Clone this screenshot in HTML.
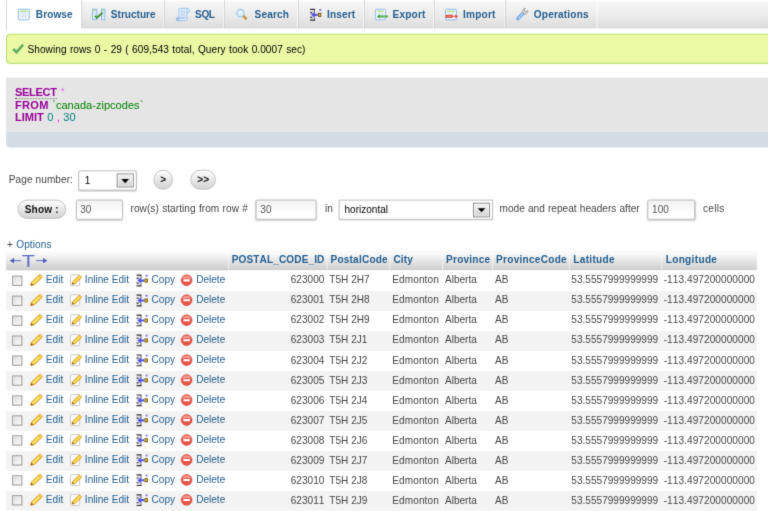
<!DOCTYPE html>
<html>
<head>
<meta charset="utf-8">
<title>phpMyAdmin</title>
<style>
html,body{margin:0;padding:0;background:#fff;}
body{width:768px;height:511px;overflow:hidden;}
#page{position:absolute;left:10px;top:10px;width:1020px;height:690px;transform:scale(0.768);transform-origin:0 0;
  font-family:"Liberation Sans",sans-serif;font-size:13.12px;color:#444;overflow:hidden;font-kerning:none;}
#wrap{position:absolute;left:-10px;top:-10px;width:800px;height:540px;background:#fff;filter:url(#softblur);}
a{color:#245e8e;text-decoration:none;}
svg{display:block;overflow:visible;}
/* tabs */
#tabs{position:absolute;left:8px;top:0;right:0;height:37.4px;background:linear-gradient(#fff 0%,#f6f6f6 7%,#ebebeb 55%,#dbdbdb 100%);}
#tabs ul{list-style:none;margin:0;padding:0;height:37.4px;}
#tabs li{float:left;height:37.4px;box-sizing:border-box;border-left:1px solid #ccc;border-right:1px solid #fff;position:relative;
  font-weight:bold;color:#245e8e;padding:0 0 0 37.3px;line-height:15px;}
#tabs li span{position:relative;top:11.55px;white-space:nowrap;}
#tabs li.active{background:#fff;height:38.5px;}
#tabs li svg{position:absolute;left:14.3px;top:11px;}
/* notice */
#notice{position:absolute;left:8px;top:43.5px;right:-10px;height:37.5px;border:1px solid #a2d246;background:#ebf8a4;border-radius:5px;color:#000;}
#notice span{position:absolute;left:26.8px;top:12.4px;word-spacing:.65px;letter-spacing:.086px;white-space:nowrap;line-height:15px;}
#notice svg{position:absolute;left:6.5px;top:10px;}
/* sql */
#sql{position:absolute;left:8px;top:101px;right:-10px;height:70.5px;background:#e5e5e5;}
#sql code{position:absolute;left:11.5px;top:11.2px;font-family:"Liberation Sans",sans-serif;font-size:14.43px;line-height:16.45px;white-space:pre;word-spacing:.4px;}
#sql b{color:#990099;}
#sql .u{border-bottom:1px dotted #555;}
#sql .p{color:#ff00ff;}
#sql .q{color:#008000;}
#sql .n{color:#008080;}
#tools{position:absolute;left:8px;top:171.5px;right:-10px;height:20.5px;background:#d3dce3;border-radius:0 0 0 5px;}
/* nav */
.abs{position:absolute;white-space:nowrap;}
.inp{position:absolute;box-sizing:border-box;border:1px solid #aaa;border-radius:2.5px;background:linear-gradient(#f1f1f1,#fff 70%);box-shadow:0 1.5px 2px #ccc;color:#555;padding:0 0 0 5px;line-height:24px;}
.inp.sel{background:#fff;color:#000;border-radius:0;border-color:#abadb3;box-shadow:0 1px 1px #ddd;}
.btn{position:absolute;box-sizing:border-box;border:1px solid #b2b2b2;border-radius:13px;background:linear-gradient(#fdfdfd,#d2d2d2);color:#111;font-weight:bold;text-align:center;}
/* table */
#tbl{position:absolute;left:8px;top:326.9px;border-collapse:collapse;table-layout:fixed;width:978px;}
#tbl th{height:25.6px;padding:0 0 3.5px 4.3px;letter-spacing:.14px;text-align:left;font-weight:bold;color:#245e8e;background:linear-gradient(#fff,#ccc);border-right:1px solid rgba(255,255,255,.55);white-space:nowrap;box-sizing:border-box;}
#tbl td{height:26.05px;padding:0 0 1.4px 3.3px;white-space:nowrap;box-sizing:border-box;overflow:hidden;}
#tbl tr.e td{background:#f3f3f3;}
#tbl td.r{text-align:right;padding:0 3.2px 1.4px 0;}
.act{position:relative;height:26.05px;}
.act a,.act svg,.act i{position:absolute;}
.act a{top:4.25px;line-height:15px;}
.act svg{top:4.1px;}
.cb{left:8px;top:6.4px;width:11px;height:11px;border:1px solid #808080;background:linear-gradient(135deg,#d8d8d8,#fff);box-shadow:inset 0 0 0 1px #f0f0f0;}
</style>
</head>
<body>
<div id="wrap"><div id="page">

<div id="tabs"><ul>
<li class="active" style="width:97.66px;padding-left:37.7px"><svg width="16" height="16" viewBox="0 0 16 16"><use href="#i-browse"/></svg><span style="letter-spacing:0.10px">Browse</span></li>
<li style="width:108.72px;padding-left:37.7px"><svg width="16" height="16" viewBox="0 0 16 16"><use href="#i-struct"/></svg><span style="letter-spacing:-0.01px">Structure</span></li>
<li style="width:77.47px;padding-left:38.7px"><svg width="16" height="16" viewBox="0 0 16 16"><use href="#i-sql"/></svg><span style="letter-spacing:-0.52px">SQL</span></li>
<li style="width:95.70px;padding-left:38.7px"><svg width="16" height="16" viewBox="0 0 16 16"><use href="#i-search"/></svg><span style="letter-spacing:0.20px">Search</span></li>
<li style="width:86.26px;padding-left:37.4px"><svg width="16" height="16" viewBox="0 0 16 16"><use href="#i-insert"/></svg><span style="letter-spacing:0.13px">Insert</span></li>
<li style="width:91.15px;padding-left:36.4px"><svg width="16" height="16" viewBox="0 0 16 16"><use href="#i-export"/></svg><span style="letter-spacing:0.24px">Export</span></li>
<li style="width:92.77px;padding-left:37.1px"><svg width="16" height="16" viewBox="0 0 16 16"><use href="#i-import"/></svg><span style="letter-spacing:0.26px">Import</span></li>
<li style="width:120.44px;padding-left:36.4px"><svg width="16" height="16" viewBox="0 0 16 16"><use href="#i-ops"/></svg><span style="letter-spacing:0.23px">Operations</span></li>
</ul></div>

<div id="notice"><svg width="16" height="16" viewBox="0 0 16 16"><use href="#i-ok"/></svg><span>Showing rows 0 - 29 ( 609,543 total, Query took 0.0007 sec)</span></div>

<div id="sql"><code><b class="u" style="letter-spacing:-.42px">SELECT</b> <span class="p" style="font-size:11.5px;line-height:0;position:relative;top:-2px;left:1.2px;color:#f5f">*</span>
<b style="letter-spacing:.4px">FROM</b> <span class="q">`canada-zipcodes`</span>
<b>LIMIT</b> <span class="n">0</span> <span class="p">,</span> <span class="n">30</span></code></div>
<div id="tools"></div>

<div class="abs" style="left:11.5px;top:225.7px;letter-spacing:.1px">Page number:</div>
<div class="inp sel" style="left:102px;top:221.5px;width:75.500px;height:26px;padding-left:7.500px;border-radius:2px">1<i style="position:absolute;right:2.5px;top:3px;width:22px;height:18.5px;border:1px solid #707070;box-sizing:border-box;background:linear-gradient(#f4f4f4,#d2d2d2);box-shadow:inset 0 0 0 1px #fff;"></i><svg style="position:absolute;right:8.5px;top:10px" width="10" height="5.5" viewBox="0 0 10 5.5"><path d="M0 0h10L5 5.500z" fill="#000"/></svg></div>
<div class="btn" style="left:199.700px;top:221px;width:25.600px;height:25.500px;line-height:23px;">&gt;</div>
<div class="btn" style="left:247.700px;top:221px;width:33.800px;height:25.500px;line-height:23px;">&gt;&gt;</div>

<div class="btn" style="left:22.800px;top:260.200px;width:63px;height:25.300px;line-height:24.2px;letter-spacing:.2px">Show :</div>
<div class="inp" style="left:98.5px;top:260px;width:61px;height:26px;">30</div>
<div class="abs" style="left:170px;top:264px;word-spacing:.65px;letter-spacing:.065px">row(s) starting from row #</div>
<div class="inp" style="left:333px;top:260px;width:79px;height:26px;">30</div>
<div class="abs" style="left:423.200px;top:264px;">in</div>
<div class="inp sel" style="left:440.500px;top:260px;width:201px;height:26px;padding-left:7px">horizontal<i style="position:absolute;right:2.5px;top:3px;width:22px;height:18.5px;border:1px solid #707070;box-sizing:border-box;background:linear-gradient(#f4f4f4,#d2d2d2);box-shadow:inset 0 0 0 1px #fff;"></i><svg style="position:absolute;right:8.5px;top:10px" width="10" height="5.5" viewBox="0 0 10 5.5"><path d="M0 0h10L5 5.500z" fill="#000"/></svg></div>
<div class="abs" style="left:650.500px;top:264px;word-spacing:.4px;letter-spacing:.03px">mode and repeat headers after</div>
<div class="inp" style="left:843px;top:260px;width:62px;height:26px;">100</div>
<div class="abs" style="left:915.500px;top:264px;letter-spacing:.3px">cells</div>

<div class="abs" style="left:9px;top:310.900px;"><a style="letter-spacing:.12px;word-spacing:.6px"><span style="color:#444">+</span> Options</a></div>

<table id="tbl">
<colgroup><col style="width:289px"><col style="width:128.5px"><col style="width:82px"><col style="width:68.6px"><col style="width:65.1px"><col style="width:100.6px"><col style="width:120.2px"><col style="width:124px"></colgroup>
<tr><th style="padding:0"><svg width="70" height="25" viewBox="0 0 70 25"><g stroke="#5565bf" stroke-width="1.200" fill="none"><path d="M7 12.400h12.500M39 12.400h12.500"/></g><path d="M4.800 12.400l5.600-3.400v6.800zM53.700 12.400l-5.600-3.400v6.800z" fill="#4a5bb8"/><text transform="translate(29.100 20.700) scale(1.300 1)" x="0" y="0" font-family="Liberation Sans, sans-serif" font-size="21.600" font-weight="normal" text-anchor="middle" fill="#5e6ec4">T</text></svg></th><th>POSTAL_CODE_ID</th><th style="letter-spacing:.27px">PostalCode</th><th>City</th><th style="letter-spacing:.27px">Province</th><th style="letter-spacing:.34px">ProvinceCode</th><th style="letter-spacing:.38px">Latitude</th><th style="letter-spacing:.43px">Longitude</th></tr>
<tr><td style="padding:0;vertical-align:top"><div class="act"><i class="cb"></i><svg style="left:31px" width="16" height="16" viewBox="0 0 16 16"><use href="#i-edit"/></svg><a style="left:51.7px">Edit</a><svg style="left:82.3px" width="16" height="16" viewBox="0 0 16 16"><use href="#i-inline"/></svg><a style="left:102.5px">Inline Edit</a><svg style="left:168.6px" width="16" height="16" viewBox="0 0 16 16"><use href="#i-insert"/></svg><a style="left:189.3px">Copy</a><svg style="left:227.2px" width="16" height="16" viewBox="0 0 16 16"><use href="#i-del"/></svg><a style="left:247.4px">Delete</a></div></td><td class="r">623000</td><td>T5H 2H7</td><td style="letter-spacing:.1px">Edmonton</td><td>Alberta</td><td>AB</td><td style="padding-left:2.2px">53.5557999999999</td><td style="letter-spacing:.09px;padding-left:2.2px">-113.497200000000</td></tr>
<tr class="e"><td style="padding:0;vertical-align:top"><div class="act"><i class="cb"></i><svg style="left:31px" width="16" height="16" viewBox="0 0 16 16"><use href="#i-edit"/></svg><a style="left:51.7px">Edit</a><svg style="left:82.3px" width="16" height="16" viewBox="0 0 16 16"><use href="#i-inline"/></svg><a style="left:102.5px">Inline Edit</a><svg style="left:168.6px" width="16" height="16" viewBox="0 0 16 16"><use href="#i-insert"/></svg><a style="left:189.3px">Copy</a><svg style="left:227.2px" width="16" height="16" viewBox="0 0 16 16"><use href="#i-del"/></svg><a style="left:247.4px">Delete</a></div></td><td class="r">623001</td><td>T5H 2H8</td><td style="letter-spacing:.1px">Edmonton</td><td>Alberta</td><td>AB</td><td style="padding-left:2.2px">53.5557999999999</td><td style="letter-spacing:.09px;padding-left:2.2px">-113.497200000000</td></tr>
<tr><td style="padding:0;vertical-align:top"><div class="act"><i class="cb"></i><svg style="left:31px" width="16" height="16" viewBox="0 0 16 16"><use href="#i-edit"/></svg><a style="left:51.7px">Edit</a><svg style="left:82.3px" width="16" height="16" viewBox="0 0 16 16"><use href="#i-inline"/></svg><a style="left:102.5px">Inline Edit</a><svg style="left:168.6px" width="16" height="16" viewBox="0 0 16 16"><use href="#i-insert"/></svg><a style="left:189.3px">Copy</a><svg style="left:227.2px" width="16" height="16" viewBox="0 0 16 16"><use href="#i-del"/></svg><a style="left:247.4px">Delete</a></div></td><td class="r">623002</td><td>T5H 2H9</td><td style="letter-spacing:.1px">Edmonton</td><td>Alberta</td><td>AB</td><td style="padding-left:2.2px">53.5557999999999</td><td style="letter-spacing:.09px;padding-left:2.2px">-113.497200000000</td></tr>
<tr class="e"><td style="padding:0;vertical-align:top"><div class="act"><i class="cb"></i><svg style="left:31px" width="16" height="16" viewBox="0 0 16 16"><use href="#i-edit"/></svg><a style="left:51.7px">Edit</a><svg style="left:82.3px" width="16" height="16" viewBox="0 0 16 16"><use href="#i-inline"/></svg><a style="left:102.5px">Inline Edit</a><svg style="left:168.6px" width="16" height="16" viewBox="0 0 16 16"><use href="#i-insert"/></svg><a style="left:189.3px">Copy</a><svg style="left:227.2px" width="16" height="16" viewBox="0 0 16 16"><use href="#i-del"/></svg><a style="left:247.4px">Delete</a></div></td><td class="r">623003</td><td>T5H 2J1</td><td style="letter-spacing:.1px">Edmonton</td><td>Alberta</td><td>AB</td><td style="padding-left:2.2px">53.5557999999999</td><td style="letter-spacing:.09px;padding-left:2.2px">-113.497200000000</td></tr>
<tr><td style="padding:0;vertical-align:top"><div class="act"><i class="cb"></i><svg style="left:31px" width="16" height="16" viewBox="0 0 16 16"><use href="#i-edit"/></svg><a style="left:51.7px">Edit</a><svg style="left:82.3px" width="16" height="16" viewBox="0 0 16 16"><use href="#i-inline"/></svg><a style="left:102.5px">Inline Edit</a><svg style="left:168.6px" width="16" height="16" viewBox="0 0 16 16"><use href="#i-insert"/></svg><a style="left:189.3px">Copy</a><svg style="left:227.2px" width="16" height="16" viewBox="0 0 16 16"><use href="#i-del"/></svg><a style="left:247.4px">Delete</a></div></td><td class="r">623004</td><td>T5H 2J2</td><td style="letter-spacing:.1px">Edmonton</td><td>Alberta</td><td>AB</td><td style="padding-left:2.2px">53.5557999999999</td><td style="letter-spacing:.09px;padding-left:2.2px">-113.497200000000</td></tr>
<tr class="e"><td style="padding:0;vertical-align:top"><div class="act"><i class="cb"></i><svg style="left:31px" width="16" height="16" viewBox="0 0 16 16"><use href="#i-edit"/></svg><a style="left:51.7px">Edit</a><svg style="left:82.3px" width="16" height="16" viewBox="0 0 16 16"><use href="#i-inline"/></svg><a style="left:102.5px">Inline Edit</a><svg style="left:168.6px" width="16" height="16" viewBox="0 0 16 16"><use href="#i-insert"/></svg><a style="left:189.3px">Copy</a><svg style="left:227.2px" width="16" height="16" viewBox="0 0 16 16"><use href="#i-del"/></svg><a style="left:247.4px">Delete</a></div></td><td class="r">623005</td><td>T5H 2J3</td><td style="letter-spacing:.1px">Edmonton</td><td>Alberta</td><td>AB</td><td style="padding-left:2.2px">53.5557999999999</td><td style="letter-spacing:.09px;padding-left:2.2px">-113.497200000000</td></tr>
<tr><td style="padding:0;vertical-align:top"><div class="act"><i class="cb"></i><svg style="left:31px" width="16" height="16" viewBox="0 0 16 16"><use href="#i-edit"/></svg><a style="left:51.7px">Edit</a><svg style="left:82.3px" width="16" height="16" viewBox="0 0 16 16"><use href="#i-inline"/></svg><a style="left:102.5px">Inline Edit</a><svg style="left:168.6px" width="16" height="16" viewBox="0 0 16 16"><use href="#i-insert"/></svg><a style="left:189.3px">Copy</a><svg style="left:227.2px" width="16" height="16" viewBox="0 0 16 16"><use href="#i-del"/></svg><a style="left:247.4px">Delete</a></div></td><td class="r">623006</td><td>T5H 2J4</td><td style="letter-spacing:.1px">Edmonton</td><td>Alberta</td><td>AB</td><td style="padding-left:2.2px">53.5557999999999</td><td style="letter-spacing:.09px;padding-left:2.2px">-113.497200000000</td></tr>
<tr class="e"><td style="padding:0;vertical-align:top"><div class="act"><i class="cb"></i><svg style="left:31px" width="16" height="16" viewBox="0 0 16 16"><use href="#i-edit"/></svg><a style="left:51.7px">Edit</a><svg style="left:82.3px" width="16" height="16" viewBox="0 0 16 16"><use href="#i-inline"/></svg><a style="left:102.5px">Inline Edit</a><svg style="left:168.6px" width="16" height="16" viewBox="0 0 16 16"><use href="#i-insert"/></svg><a style="left:189.3px">Copy</a><svg style="left:227.2px" width="16" height="16" viewBox="0 0 16 16"><use href="#i-del"/></svg><a style="left:247.4px">Delete</a></div></td><td class="r">623007</td><td>T5H 2J5</td><td style="letter-spacing:.1px">Edmonton</td><td>Alberta</td><td>AB</td><td style="padding-left:2.2px">53.5557999999999</td><td style="letter-spacing:.09px;padding-left:2.2px">-113.497200000000</td></tr>
<tr><td style="padding:0;vertical-align:top"><div class="act"><i class="cb"></i><svg style="left:31px" width="16" height="16" viewBox="0 0 16 16"><use href="#i-edit"/></svg><a style="left:51.7px">Edit</a><svg style="left:82.3px" width="16" height="16" viewBox="0 0 16 16"><use href="#i-inline"/></svg><a style="left:102.5px">Inline Edit</a><svg style="left:168.6px" width="16" height="16" viewBox="0 0 16 16"><use href="#i-insert"/></svg><a style="left:189.3px">Copy</a><svg style="left:227.2px" width="16" height="16" viewBox="0 0 16 16"><use href="#i-del"/></svg><a style="left:247.4px">Delete</a></div></td><td class="r">623008</td><td>T5H 2J6</td><td style="letter-spacing:.1px">Edmonton</td><td>Alberta</td><td>AB</td><td style="padding-left:2.2px">53.5557999999999</td><td style="letter-spacing:.09px;padding-left:2.2px">-113.497200000000</td></tr>
<tr class="e"><td style="padding:0;vertical-align:top"><div class="act"><i class="cb"></i><svg style="left:31px" width="16" height="16" viewBox="0 0 16 16"><use href="#i-edit"/></svg><a style="left:51.7px">Edit</a><svg style="left:82.3px" width="16" height="16" viewBox="0 0 16 16"><use href="#i-inline"/></svg><a style="left:102.5px">Inline Edit</a><svg style="left:168.6px" width="16" height="16" viewBox="0 0 16 16"><use href="#i-insert"/></svg><a style="left:189.3px">Copy</a><svg style="left:227.2px" width="16" height="16" viewBox="0 0 16 16"><use href="#i-del"/></svg><a style="left:247.4px">Delete</a></div></td><td class="r">623009</td><td>T5H 2J7</td><td style="letter-spacing:.1px">Edmonton</td><td>Alberta</td><td>AB</td><td style="padding-left:2.2px">53.5557999999999</td><td style="letter-spacing:.09px;padding-left:2.2px">-113.497200000000</td></tr>
<tr><td style="padding:0;vertical-align:top"><div class="act"><i class="cb"></i><svg style="left:31px" width="16" height="16" viewBox="0 0 16 16"><use href="#i-edit"/></svg><a style="left:51.7px">Edit</a><svg style="left:82.3px" width="16" height="16" viewBox="0 0 16 16"><use href="#i-inline"/></svg><a style="left:102.5px">Inline Edit</a><svg style="left:168.6px" width="16" height="16" viewBox="0 0 16 16"><use href="#i-insert"/></svg><a style="left:189.3px">Copy</a><svg style="left:227.2px" width="16" height="16" viewBox="0 0 16 16"><use href="#i-del"/></svg><a style="left:247.4px">Delete</a></div></td><td class="r">623010</td><td>T5H 2J8</td><td style="letter-spacing:.1px">Edmonton</td><td>Alberta</td><td>AB</td><td style="padding-left:2.2px">53.5557999999999</td><td style="letter-spacing:.09px;padding-left:2.2px">-113.497200000000</td></tr>
<tr class="e"><td style="padding:0;vertical-align:top"><div class="act"><i class="cb"></i><svg style="left:31px" width="16" height="16" viewBox="0 0 16 16"><use href="#i-edit"/></svg><a style="left:51.7px">Edit</a><svg style="left:82.3px" width="16" height="16" viewBox="0 0 16 16"><use href="#i-inline"/></svg><a style="left:102.5px">Inline Edit</a><svg style="left:168.6px" width="16" height="16" viewBox="0 0 16 16"><use href="#i-insert"/></svg><a style="left:189.3px">Copy</a><svg style="left:227.2px" width="16" height="16" viewBox="0 0 16 16"><use href="#i-del"/></svg><a style="left:247.4px">Delete</a></div></td><td class="r">623011</td><td>T5H 2J9</td><td style="letter-spacing:.1px">Edmonton</td><td>Alberta</td><td>AB</td><td style="padding-left:2.2px">53.5557999999999</td><td style="letter-spacing:.09px;padding-left:2.2px">-113.497200000000</td></tr>
<tr><td style="padding:0;vertical-align:top"><div class="act"><i class="cb"></i><svg style="left:31px" width="16" height="16" viewBox="0 0 16 16"><use href="#i-edit"/></svg><a style="left:51.7px">Edit</a><svg style="left:82.3px" width="16" height="16" viewBox="0 0 16 16"><use href="#i-inline"/></svg><a style="left:102.5px">Inline Edit</a><svg style="left:168.6px" width="16" height="16" viewBox="0 0 16 16"><use href="#i-insert"/></svg><a style="left:189.3px">Copy</a><svg style="left:227.2px" width="16" height="16" viewBox="0 0 16 16"><use href="#i-del"/></svg><a style="left:247.4px">Delete</a></div></td><td class="r">623012</td><td>T5H 2K1</td><td style="letter-spacing:.1px">Edmonton</td><td>Alberta</td><td>AB</td><td style="padding-left:2.2px">53.5557999999999</td><td style="letter-spacing:.09px;padding-left:2.2px">-113.497200000000</td></tr>
</table>

<svg width="0" height="0" style="position:absolute">
<defs><filter id="softblur" x="0" y="0" width="100%" height="100%" color-interpolation-filters="sRGB"><feConvolveMatrix order="3" kernelMatrix="0.013 0.087 0.013 0.087 0.6 0.087 0.013 0.087 0.013" edgeMode="duplicate" preserveAlpha="true"/></filter>
<g id="tblbase"><rect x=".8" y="1" width="14.4" height="13.8" rx="1.2" fill="#dcebfb" stroke="#8dbbea" stroke-width="1.2"/><rect x="2.3" y="2.5" width="11.4" height="10.8" fill="#fff"/><rect x="3" y="3" width="10" height="1.2" fill="#8fd14f"/><path d="M3 6h10M3 8.500h10M3 11h10M6.500 6v6M10 6v6" stroke="#bcd5f1" stroke-width=".9" fill="none"/></g>
<g id="i-browse"><use href="#tblbase"/></g>
<g id="i-struct"><rect x="-.6" y=".9" width="5.600" height="13.800" fill="#eaf3fd" stroke="#7fb0e8" stroke-width="1.100"/><rect x="11" y=".9" width="4.500" height="13.800" fill="#eaf3fd" stroke="#7fb0e8" stroke-width="1.100"/><path d="M.3 2.800h4M11.800 2.800h3" stroke="#8fd14f" stroke-width="1"/><path d="M.8 5.500h3M.8 8h3M.8 10.500h3M12 5.500h2.500M12 8h2.500M12 10.500h2.500" stroke="#b3d0f0" stroke-width=".9"/><path d="M2.700 9.700l2.200 2.500l7.600-6.700" stroke="#3f9a35" stroke-width="2.500" fill="none" stroke-linejoin="miter"/></g>
<g id="i-sql"><path d="M11.500 -.1h2.300c1.800 0 2.900 1.200 2.900 2.900c0 1.700-1.200 2.800-3.200 3z" fill="#e6f1fc" stroke="#86b7ec" stroke-width="1.100"/><path d="M2.400 12h-1c-1.200 0-1.700.9-1.700 1.900c0 1.100.7 1.900 1.900 1.900h4z" fill="#d9e9fa" stroke="#5f93dc" stroke-width="1.100"/><path d="M3.400 -.1h8.600c.9 0 1.400.5 1.400 1.400v12.600c0 1.200-.7 1.900-1.900 1.900h-9.900c1 0 1.400-.9 1.400-1.900v-13c0-.6.200-1 .4-1z" fill="#edf5fd" stroke="#8ebcec" stroke-width="1.100"/><rect x="4.600" y="1.700" width="7" height="10" fill="#c9dff6"/><path d="M2.600 12.600h9" stroke="#6c9fe0" stroke-width="1"/></g>
<g id="i-search"><circle cx="6.200" cy="6.200" r="4.800" fill="#dcecfb" stroke="#a3caf0" stroke-width="1.700"/><circle cx="5.600" cy="5.600" r="2.200" fill="#eef6fe"/><path d="M10.600 10.500l2.600 2.700" stroke="#c9954a" stroke-width="3.400" stroke-linecap="round"/></g>
<g id="i-insert"><rect x=".9" y="1.500" width="5.700" height="13.600" fill="#d4d4d4" opacity=".55"/><path d="M.8 1.300h6.200M.8 15.200h6.200M.8 5.400h2.700M.8 11.600h2.700" stroke="#333" stroke-width="1.500" fill="none"/><path d="M6.600 1v3.800M6.600 12.200v3.600" stroke="#333" stroke-width="1" fill="none"/><path d="M2 8.300l5-4.300v2.900h3.600v2.800h-3.600v2.900z" fill="#5654dc"/><rect x="11.700" y="6.300" width="3.100" height="4" fill="#ffc81a" stroke="#453408" stroke-width="1"/><rect x="12.600" y=".7" width="2.600" height="2.600" rx=".6" fill="#7c7ce8"/></g>
<g id="i-export"><use href="#tblbase" transform="translate(-1 0) scale(.93 1)"/><path d="M1.800 10.400l3.600-2.900v1.600h9.800c1.300 0 1.300 2.600 0 2.600h-9.800v1.600z" fill="#3f9e3a"/><path d="M5.500 10.300h9.500" stroke="#86d680" stroke-width=".8"/></g>
<g id="i-import"><use href="#tblbase" transform="translate(-.7 0)"/><rect x=".3" y="8.300" width="9" height="4" fill="#e8483c"/><path d="M2.500 10.300h5" stroke="#f8c0b8" stroke-width=".9"/><path d="M9.300 10.300h4" stroke="#e8483c" stroke-width="1.200"/><path d="M12.600 7.900l3.900 2.400l-3.900 2.400z" fill="#e8483c"/></g>
<g id="i-ops"><path d="M1.400 13.200l6.900-6.900" stroke="#6aa3e6" stroke-width="4.500" stroke-linecap="round"/><path d="M1.800 12.800l6-6" stroke="#b9d7f6" stroke-width="1.700" stroke-linecap="round"/><g transform="translate(-.9 -1.400)"><path d="M9 7.500c-1.500-2-1-4.500 1-5.800c.8-.5 1.500-.6 2.200-.5l-1.800 2.600l.7 1.800l2 .4l1.900-2.400c.6 1.500 0 3.600-1.600 4.700c-1.400.9-3 .7-4.400-.8z" fill="#d6d6d6" stroke="#8f8f8f" stroke-width=".9"/></g></g>
<g id="i-ok"><path d="M1.300 8.800l4.200 4.300l8.600-10" stroke="#62b062" stroke-width="3.400" fill="none"/></g>
<g id="i-edit"><path d="M1 14.800l1-4.300l9.700-9.300c.8-.7 1.500-.7 2.300 0l1.200 1.200c.7.800.7 1.500 0 2.300l-9.700 9.300z" fill="#f9d94a" stroke="#d68a1e" stroke-width="1.100"/><path d="M4 11.500l8-7.700" stroke="#fdf0a0" stroke-width="1.200"/><path d="M1 14.800l.8-3.200l2.600 2.400z" fill="#8a5a28"/><path d="M11 2l3.300 3.300" stroke="#e8a84a" stroke-width="1.200"/></g>
<g id="i-inline"><rect x="1.900" y=".8" width="11.800" height="14.400" rx="1" fill="#fbfbfb" stroke="#c4c4c4" stroke-width="1.100"/><path d="M3.800 13.300l.8-3.500l8-7.700c.6-.6 1.300-.6 1.900 0l1 1c.6.600.6 1.300 0 1.900l-8 7.700z" fill="#f9d94a" stroke="#d68a1e" stroke-width="1"/><path d="M3.800 13.300l.7-2.700l2.200 2z" fill="#8a5a28"/></g>
<g id="i-del"><circle cx="8" cy="7.900" r="7.100" fill="#e4564b" stroke="#d9473c" stroke-width=".8"/><path d="M2 6.200a6.200 5.500 0 0 1 12 0a12 7 0 0 0-12 0z" fill="#f6b3ab" opacity=".75"/><rect x="3.800" y="6.700" width="8.400" height="2.700" rx=".5" fill="#fff"/></g>
</defs>
</svg>

</div></div>
</body>
</html>
